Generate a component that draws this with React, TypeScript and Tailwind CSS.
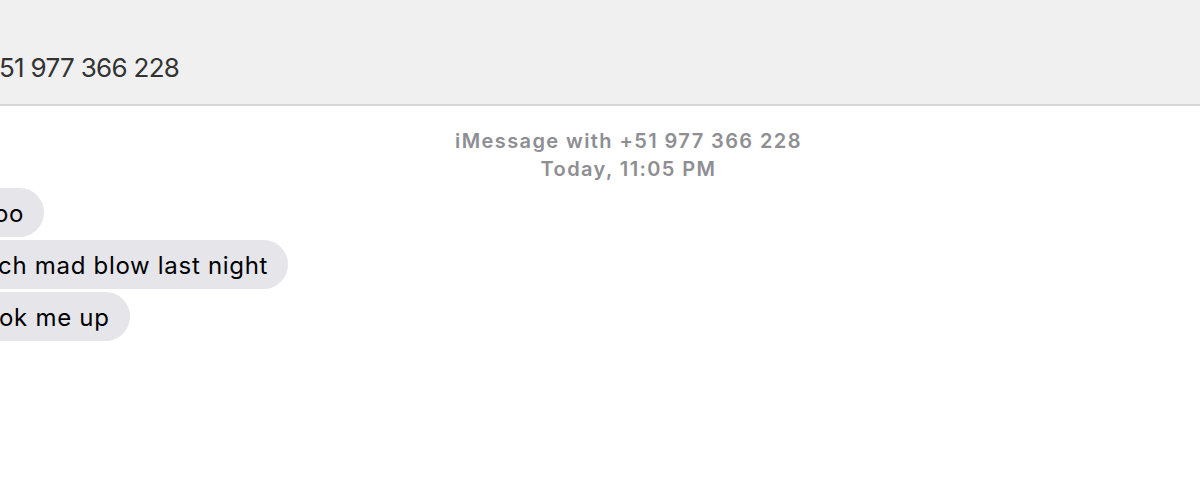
const font = { fontFamily: 'Inter, "Noto Sans", sans-serif' };

const messages = [
  { text: 'oo', shift: '-ml-[6px]' },
  { text: 'ch mad blow last night', shift: '-ml-[2px]' },
  { text: 'ok me up', shift: '-ml-[1px]' },
];

export default function App() {
  return (
    <div className="w-[1200px] h-[502px] overflow-hidden bg-white" style={font}>
      <div className="h-[106px] bg-[#f0f0f0] border-b-2 border-[#d6d6d6] pt-[52px]">
        <div className="text-[26px] leading-[32px] tracking-[-0.7px] text-[#333333] -ml-[1px]">51 977 366 228</div>
      </div>

      <div className="mt-[21px] pl-[57px] text-center text-[20px] leading-[28px] font-semibold tracking-[1.4px] text-[#8e8e93]">
        <div>iMessage with +51 977 366 228</div>
        <div>Today, 11:05 PM</div>
      </div>

      <div className="mt-[5px] flex flex-col items-start gap-[3px]">
        {messages.map((m) => (
          <div
            key={m.text}
            className="h-[49px] flex items-center pt-[3px] bg-[#e5e5ea] rounded-r-[25px] pr-[20px] text-[24px] tracking-[0.7px] text-black"
          >
            <span className={m.shift}>{m.text}</span>
          </div>
        ))}
      </div>
    </div>
  );
}
